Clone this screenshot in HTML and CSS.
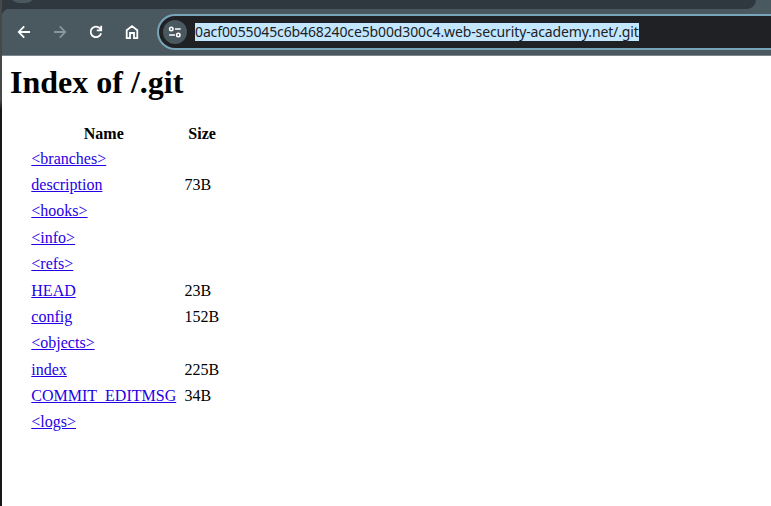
FILE: index.html
```
<!DOCTYPE html>
<html lang="en">
<head>
<meta charset="utf-8">
<title>Index of /.git</title>
<link rel="stylesheet" href="styles.css">
</head>
<body>
<div class="window">
  <div class="tabstrip"><div class="tab-button"></div><div class="tabs"></div></div>
  <div class="toolbar">
    <div class="nav">
      <svg class="icon" viewBox="0 0 16 16"><path d="M14 8H3M8.2 2.4 2.8 8l5.4 5.6"/></svg>
      <svg class="icon disabled" viewBox="0 0 16 16"><path d="M2 8h11M7.8 2.4 13.2 8l-5.4 5.6"/></svg>
      <svg class="icon" viewBox="0 0 16 16"><path d="M13.1 9.2A5.3 5.3 0 1 1 12 4.4L13.2 5.8M13.2 1.8v4.6H8.8"/></svg>
      <svg class="icon" viewBox="0 0 16 16"><path d="M2.7 6.2 8 2.1l5.3 4.1v7.9H10V9H6v5.1H2.7z"/></svg>
    </div>
    <div class="address">
      <div class="site-info">
        <svg class="tune" viewBox="0 0 14 12"><circle cx="3.3" cy="3" r="1.7"/><path d="M7 3h5.7M1.2 9h5.7"/><circle cx="10.3" cy="9" r="1.7"/></svg>
      </div>
      <span class="url">0acf0055045c6b468240ce5b00d300c4.web-security-academy.net/.git</span>
    </div>
  </div>
  <main class="page">
    <h1>Index of /.git</h1>
    <div class="listing">
      <b>Name</b><b>Size</b>
      <a href="#">&lt;branches&gt;</a><span></span>
      <a href="#">description</a><span>73B</span>
      <a href="#">&lt;hooks&gt;</a><span></span>
      <a href="#">&lt;info&gt;</a><span></span>
      <a href="#">&lt;refs&gt;</a><span></span>
      <a href="#">HEAD</a><span>23B</span>
      <a href="#">config</a><span>152B</span>
      <a href="#">&lt;objects&gt;</a><span></span>
      <a href="#">index</a><span>225B</span>
      <a href="#">COMMIT_EDITMSG</a><span>34B</span>
      <a href="#">&lt;logs&gt;</a><span></span>
    </div>
  </main>
</div>
</body>
</html>
```
FILE: styles.css
```
* { box-sizing: border-box; }
body {
  margin: 0;
  height: 506px;
  overflow: hidden;
  padding-left: 2px;
  background: linear-gradient(#46484a 0, #46484a 100px, #161616 110px, #161616 100%);
}
.window { height: 506px; display: flex; flex-direction: column; background: #fff; }
.tabstrip { height: 9px; background: #4a5860; flex: none; display: flex; position: relative; }
.tabs { width: 754px; background: #2f383f; border-bottom-right-radius: 9px; }
.tab-button {
  position: absolute; left: 8px; top: -19px;
  width: 25px; height: 22px; border-radius: 9px; background: #4a5860;
}
.toolbar {
  height: 47px; flex: none;
  display: flex; align-items: flex-start;
  background: radial-gradient(circle at 8px 8px, #4a5860 8px, #2f383f 8.7px) 0 0 / 8px 8px no-repeat, #4a5860;
  border-bottom: 1px solid #7c868c;
}
.nav { display: flex; gap: 20px; padding: 15px 0 0 14px; width: 155px; flex: none; }
.icon { width: 16px; height: 16px; fill: none; stroke: #fff; stroke-width: 1.8; }
.disabled { stroke: #8b969c; }
.address {
  flex: 1; height: 36px; margin-top: 5px; padding-left: 4px;
  display: flex; align-items: center;
  background: #202124;
  border: 2px solid #79a5b8; border-right: 0;
  border-radius: 18px 0 0 18px;
}
.site-info {
  width: 24px; height: 24px; border-radius: 50%; background: #4a5860;
  display: flex; align-items: center; justify-content: center; flex: none;
}
.tune { width: 14px; height: 12px; fill: none; stroke: #fff; stroke-width: 1.6; }
.url {
  margin-left: 8px; width: 444px; height: 18px;
  background: #c2e7ff; color: #202124;
  font: 14px/18px "Noto Sans", "Open Sans", sans-serif;
  letter-spacing: -0.125px; white-space: nowrap;
}
.page { flex: 1; padding: 8px; font: 16px/18px "Liberation Serif", "Times New Roman", serif; color: #000; }
h1 { margin: 0; font-size: 32px; line-height: 37px; }
.listing {
  margin: 20px 0 0 21.3px;
  display: grid; grid-template-columns: 145px 35px; column-gap: 8.3px;
  grid-template-rows: 24.57px; grid-auto-rows: 26.36px;
  align-items: center;
}
.listing b { text-align: center; align-self: end; padding-bottom: 3px; }
.listing a { color: #2500e6; text-decoration: underline; justify-self: start; }
```
